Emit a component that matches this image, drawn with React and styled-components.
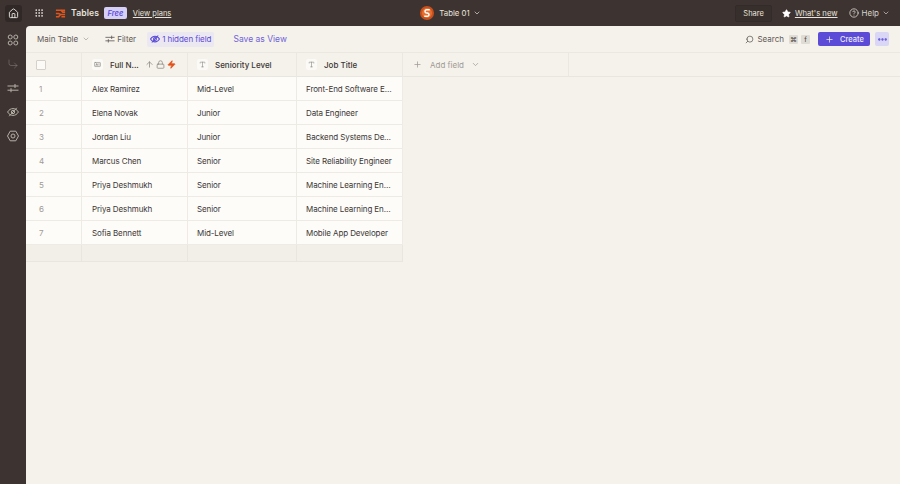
import React from "react";
import styled, { createGlobalStyle } from "styled-components";
import {
  ArrowUp,
  ChevronDown,
  CircleHelp,
  CornerDownRight,
  House,
  Lock,
  Plus,
  Search,
  Star,
  Zap,
  Ellipsis,
  Grip,
  Type,
  IdCard,
} from "lucide-react";

const rows = [
  ["Alex Ramirez", "Mid-Level", "Front-End Software Engineer"],
  ["Elena Novak", "Junior", "Data Engineer"],
  ["Jordan Liu", "Junior", "Backend Systems Developer"],
  ["Marcus Chen", "Senior", "Site Reliability Engineer"],
  ["Priya Deshmukh", "Senior", "Machine Learning Engineer"],
  ["Priya Deshmukh", "Senior", "Machine Learning Engineer"],
  ["Sofia Bennett", "Mid-Level", "Mobile App Developer"],
];

const GlobalStyle = createGlobalStyle`
  html, body {
    margin: 0;
    height: 100%;
    overflow: hidden;
    background: #3d3431;
    font-family: Inter, "Liberation Sans", sans-serif;
  }
  #root { height: 100%; }
`;

const Page = styled.div`
  display: grid;
  grid-template-columns: 26px 1fr;
  grid-template-rows: 26px 1fr;
  width: 900px;
  height: 484px;
  background: #3d3431;
`;

const TopBar = styled.header`
  grid-column: 1 / 3;
  display: grid;
  grid-template-columns: 1fr auto 1fr;
  align-items: center;
  color: #f4f1ea;
  font-size: 8px;
`;

const TopLeft = styled.div`
  display: flex;
  align-items: center;
`;

const HomeButton = styled.div`
  display: flex;
  align-items: center;
  justify-content: center;
  width: 17px;
  height: 17px;
  margin-left: 5px;
  border-radius: 3px;
  background: #2f2826;
`;

const AppsIcon = styled.span`
  display: flex;
  margin-left: 12px;
  color: #e9e5de;
`;

const Brand = styled.span`
  margin-left: 5px;
  font-size: 8.6px;
  font-weight: 600;
  letter-spacing: 0.1px;
  color: #e9e5de;
`;

const FreeBadge = styled.span`
  margin-left: 5px;
  padding: 1.5px 3.5px;
  border-radius: 2px;
  background: #d6d0f7;
  color: #5b4bd6;
  font-size: 7.5px;
  font-style: italic;
  font-weight: 600;
`;

const TopLink = styled.span`
  margin-left: ${(p) => p.$gap || 0}px;
  font-size: ${(p) => p.$size || 7.5}px;
  text-decoration: underline;
  color: #e9e5de;
`;

const TopCenter = styled.div`
  display: flex;
  align-items: center;
  gap: 5px;
  padding-left: 1px;
  font-size: 7.8px;
  color: #e9e5de;
`;

const TopRight = styled.div`
  display: flex;
  align-items: center;
  justify-content: flex-end;
  padding-right: 10px;
`;

const ShareButton = styled.div`
  display: flex;
  align-items: center;
  height: 15px;
  padding: 0 7px;
  border: 1px solid #332b29;
  border-radius: 2px;
  background: #372f2c;
  font-size: 7.5px;
  color: #e9e5de;
`;

const TopItem = styled.div`
  display: flex;
  align-items: center;
  gap: ${(p) => p.$inner || 4}px;
  margin-left: ${(p) => p.$gap}px;
  font-size: 8px;
  color: #d8d3cc;
`;

const Rail = styled.nav`
  display: flex;
  flex-direction: column;
  align-items: center;
  gap: 12px;
  padding-top: 8px;
  color: #b6afa8;
`;

const Main = styled.main`
  display: flex;
  flex-direction: column;
  min-width: 0;
  border-top-left-radius: 4px;
  background: #f5f2ec;
  overflow: hidden;
`;

const Toolbar = styled.div`
  display: flex;
  align-items: center;
  height: 26px;
  padding: 0 11px;
  flex-shrink: 0;
  font-size: 8px;
  color: #5f5955;
`;

const ToolLabel = styled.span`
  display: flex;
  align-items: center;
  gap: ${(p) => p.$inner || 3}px;
  margin-left: ${(p) => p.$gap || 0}px;
`;

const HiddenPill = styled.span`
  display: flex;
  align-items: center;
  gap: 2px;
  height: 15px;
  margin-left: 11px;
  padding: 0 3px;
  border-radius: 2px;
  background: #ebe8f2;
  color: #5b4bd6;
  letter-spacing: -0.05px;
`;

const SaveView = styled.span`
  margin-left: 19px;
  font-size: 8.5px;
  color: #6f62d8;
`;

const ToolRight = styled.div`
  display: flex;
  align-items: center;
  margin-left: auto;
`;

const Key = styled.span`
  display: flex;
  align-items: center;
  justify-content: center;
  width: 9px;
  height: 9px;
  margin-left: ${(p) => p.$gap}px;
  border-radius: 1px;
  background: #dfdcd5;
  font-size: 7px;
  color: #4d4744;
`;

const CreateButton = styled.div`
  display: flex;
  align-items: center;
  gap: 6px;
  width: 52px;
  height: 14px;
  box-sizing: border-box;
  margin-left: 8px;
  padding-left: 7px;
  border-radius: 2px;
  background: #5b4bd6;
  color: #eceafa;
  font-size: 7.5px;
  font-weight: 500;
`;

const MoreButton = styled.div`
  display: flex;
  align-items: center;
  justify-content: center;
  width: 14px;
  height: 14px;
  margin-left: 5px;
  border-radius: 2px;
  background: #d9d6f6;
  color: #5b4bd6;
`;

const TableGrid = styled.div`
  display: grid;
  grid-template-columns: 56px 106px 109px 106px 166px 1fr;
  grid-template-rows: 24px repeat(7, 24px) 17px;
  border-top: 1px solid #ebe8e1;
`;

const HeadCell = styled.div`
  display: flex;
  align-items: center;
  min-width: 0;
  padding-left: ${(p) => p.$pad || 0}px;
  border-right: ${(p) => (p.$last ? "none" : "1px solid #ebe8e1")};
  border-bottom: 1px solid #e9e6df;
  font-size: 8px;
  font-weight: 500;
  color: #3c3735;
`;

const CheckBox = styled.span`
  width: 8px;
  height: 8px;
  border: 1px solid #d5d1ca;
  border-radius: 1px;
  background: #fbfaf7;
`;

const FieldIcon = styled.span`
  display: flex;
  align-items: center;
  justify-content: center;
  flex-shrink: 0;
  width: 11px;
  height: 11px;
  margin-right: 7px;
  border-radius: 2px;
  background: #fbfaf7;
  color: #8a847e;
`;

const HeadIcons = styled.span`
  display: flex;
  align-items: center;
  gap: 2px;
  margin-left: 6px;
  color: #8a847e;
`;

const Cell = styled.div`
  display: flex;
  align-items: center;
  min-width: 0;
  box-sizing: border-box;
  padding-left: ${(p) => p.$pad}px;
  border-right: 1px solid #eeebe5;
  border-bottom: 1px solid #eeebe5;
  background: #fdfcf9;
  font-size: 8px;
  letter-spacing: -0.1px;
  color: ${(p) => (p.$muted ? "#a09a94" : "#3c3735")};
`;

const CellText = styled.span`
  overflow: hidden;
  white-space: nowrap;
  text-overflow: ellipsis;
  padding-right: 8px;
`;

const Blank = styled.div`
  border-right: 1px solid #e9e6df;
  border-bottom: 1px solid #e9e6df;
  background: #f2efe9;
`;

const AddField = styled.span`
  display: flex;
  align-items: center;
  gap: 9px;
  font-weight: 400;
  color: #a09a94;
`;

const RowFill = styled.div`
  grid-column: 5 / 7;
`;

function LogoBars() {
  return (
    <svg width="11" height="11" viewBox="0 0 12 12" style={{ marginLeft: 11 }}>
      <path d="M1 2.5h5.5l2 2H11M1 6h3l2 1h5M1 9.5h3l2-2.5M7 9.5h4M7 2.5h4" fill="none" stroke="#e2541c" strokeWidth="1.7" />
    </svg>
  );
}

function TableLogo() {
  return (
    <svg width="14" height="14" viewBox="0 0 14 14">
      <circle cx="7" cy="7" r="7" fill="#c9501c" />
      <circle cx="7" cy="7" r="5" fill="#e8702e" />
      <path d="M9.8 3.8H6.6a1.6 1.6 0 0 0-.8 3l2.4.5a1.6 1.6 0 0 1-.8 3H4.2" fill="none" stroke="#fff" strokeWidth="1.5" />
    </svg>
  );
}

function RailPods() {
  return (
    <svg width="12" height="12" viewBox="0 0 12 12" fill="none" stroke="currentColor" strokeWidth="1">
      <circle cx="3.2" cy="3" r="2" />
      <circle cx="8.8" cy="3" r="2" />
      <circle cx="3.2" cy="9" r="2" />
      <circle cx="8.8" cy="9" r="2" />
    </svg>
  );
}

function RailGear() {
  return (
    <svg width="12" height="12" viewBox="0 0 12 12" fill="none" stroke="currentColor" strokeWidth="1">
      <path d="M3.2 1.2h5.6L11.5 6l-2.7 4.8H3.2L.5 6z" />
      <circle cx="6" cy="6" r="2" />
    </svg>
  );
}

function Sliders({ size }) {
  return (
    <svg width={size} height={size} viewBox="0 0 12 12" fill="none" stroke="currentColor" strokeWidth="1">
      <path d="M.5 4h11M8 2v4M.5 8.2h11M4 6.2v4" />
    </svg>
  );
}

function EyeSlash({ size, bold }) {
  return (
    <svg width={size} height={size} viewBox="0 0 12 12" fill="none" stroke="currentColor" strokeWidth={bold ? 1.3 : 1}>
      <path d="M.6 6C2 3.6 3.9 2.6 6 2.6S10 3.6 11.4 6C10 8.4 8.1 9.4 6 9.4S2 8.4.6 6z" />
      <circle cx="6" cy="6" r="1.7" />
      <path d="M2.2 10.2 9.8 1.8" />
    </svg>
  );
}

export default function App() {
  return (
    <>
      <GlobalStyle />
      <Page>
        <TopBar>
          <TopLeft>
            <HomeButton>
              <House size={11} color="#e9e5de" />
            </HomeButton>
            <AppsIcon>
              <Grip size={10} />
            </AppsIcon>
            <LogoBars />
            <Brand>Tables</Brand>
            <FreeBadge>Free</FreeBadge>
            <TopLink $gap={6}>View plans</TopLink>
          </TopLeft>
          <TopCenter>
            <TableLogo />
            <span>Table 01</span>
            <ChevronDown size={8} style={{ marginLeft: -2 }} />
          </TopCenter>
          <TopRight>
            <ShareButton>Share</ShareButton>
            <TopItem $gap={10}>
              <Star size={9} fill="#fff" color="#fff" />
              <TopLink $size={7.7}>What's new</TopLink>
            </TopItem>
            <TopItem $gap={11} $inner={3}>
              <CircleHelp size={10} />
              <span>Help</span>
              <ChevronDown size={8} />
            </TopItem>
          </TopRight>
        </TopBar>
        <Rail>
          <RailPods />
          <CornerDownRight size={12} strokeWidth={1} color="#8d8680" />
          <Sliders size={12} />
          <EyeSlash size={12} />
          <RailGear />
        </Rail>
        <Main>
          <Toolbar>
            <ToolLabel $inner={4}>
              Main Table
              <ChevronDown size={8} color="#a09a94" />
            </ToolLabel>
            <ToolLabel $gap={15} $inner={2}>
              <Sliders size={10} />
              Filter
            </ToolLabel>
            <HiddenPill>
              <EyeSlash size={10} bold />1 hidden field
            </HiddenPill>
            <SaveView>Save as View</SaveView>
            <ToolRight>
              <ToolLabel $inner={3}>
                <Search size={9} style={{ transform: "scaleX(-1)" }} />
                Search
              </ToolLabel>
              <Key $gap={5}>⌘</Key>
              <Key $gap={3}>f</Key>
              <CreateButton>
                <Plus size={9} />
                Create
              </CreateButton>
              <MoreButton>
                <Ellipsis size={11} strokeWidth={3} />
              </MoreButton>
            </ToolRight>
          </Toolbar>
          <TableGrid>
            <HeadCell $pad={10}>
              <CheckBox />
            </HeadCell>
            <HeadCell $pad={10}>
              <FieldIcon>
                <IdCard size={7} />
              </FieldIcon>
              <span>Full N...</span>
              <HeadIcons>
                <ArrowUp size={9} />
                <Lock size={9} />
                <Zap size={9} fill="#e2541c" color="#e2541c" />
              </HeadIcons>
            </HeadCell>
            <HeadCell $pad={9}>
              <FieldIcon>
                <Type size={7} />
              </FieldIcon>
              Seniority Level
            </HeadCell>
            <HeadCell $pad={9}>
              <FieldIcon>
                <Type size={7} />
              </FieldIcon>
              Job Title
            </HeadCell>
            <HeadCell $pad={10}>
              <AddField>
                <Plus size={9} />
                <span style={{ marginLeft: -1 }}>Add field</span>
                <ChevronDown size={9} style={{ marginLeft: -2 }} />
              </AddField>
            </HeadCell>
            <HeadCell $last />
            {rows.map((row, i) => (
              <React.Fragment key={i}>
                <Cell $pad={13} $muted>
                  {i + 1}
                </Cell>
                <Cell $pad={10}>
                  <CellText>{row[0]}</CellText>
                </Cell>
                <Cell $pad={9}>
                  <CellText>{row[1]}</CellText>
                </Cell>
                <Cell $pad={9}>
                  <CellText>{row[2]}</CellText>
                </Cell>
                <RowFill />
              </React.Fragment>
            ))}
            <Blank />
            <Blank />
            <Blank />
            <Blank />
          </TableGrid>
        </Main>
      </Page>
    </>
  );
}
